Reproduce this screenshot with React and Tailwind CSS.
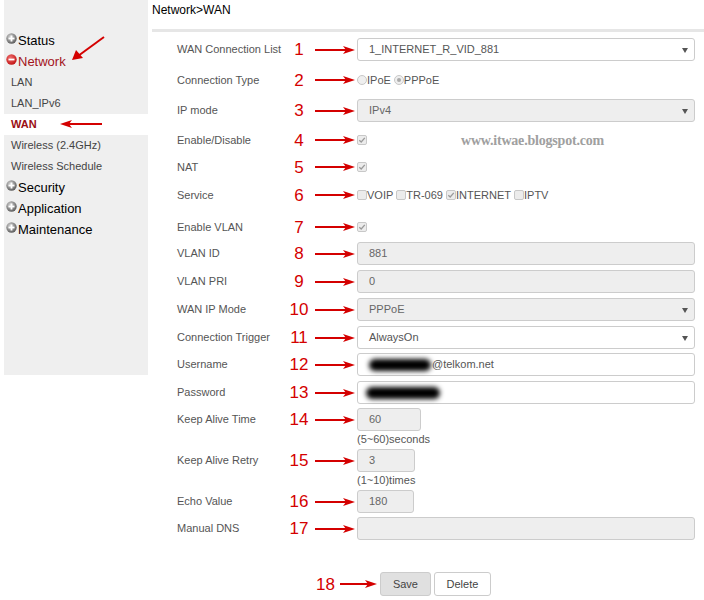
import React from "react";

const RED = "#d40000";

const Arrow = ({ w = 40 }) => (
  <svg width={w} height="10" viewBox={`0 0 ${w} 10`}>
    <line x1="0" y1="5" x2={w - 9} y2="5" stroke={RED} strokeWidth="2" />
    <polygon points={`${w - 12},1 ${w},5 ${w - 12},9 ${w - 9},5`} fill={RED} />
  </svg>
);

const Toggle = ({ minus }) => (
  <svg width="11" height="11" viewBox="0 0 11 11" className="mr-[1px] -mt-[4px] shrink-0">
    <defs>
      <radialGradient id={minus ? "gm" : "gp"} cx="0.4" cy="0.35" r="0.7">
        <stop offset="0" stopColor={minus ? "#f07070" : "#d8d8d8"} />
        <stop offset="1" stopColor={minus ? "#c01010" : "#555"} />
      </radialGradient>
    </defs>
    <circle cx="5.5" cy="5.5" r="5.2" fill={`url(#${minus ? "gm" : "gp"})`} />
    <rect x="2.5" y="4.6" width="6" height="1.8" fill="#fff" />
    {!minus && <rect x="4.6" y="2.5" width="1.8" height="6" fill="#fff" />}
  </svg>
);

const Check = ({ checked }) => (
  <span className="inline-flex items-center justify-center w-[10px] h-[10px] rounded-[2px] border border-[#c8c8c8] bg-[#ececec] shrink-0">
    {checked && (
      <svg width="8" height="8" viewBox="0 0 8 8">
        <path d="M1.3 4.2 L3.2 6 L6.8 1.8" stroke="#9a9a9a" strokeWidth="1.3" fill="none" />
      </svg>
    )}
  </span>
);

const Radio = ({ checked }) => (
  <span className="inline-flex items-center justify-center w-[10px] h-[10px] rounded-full border border-[#c8c8c8] bg-[#efefef] shrink-0">
    {checked && <span className="w-[4px] h-[4px] rounded-full bg-[#aaa]" />}
  </span>
);

const Caret = () => (
  <span className="absolute right-[6px] top-[9px] w-0 h-0 border-l-[3px] border-r-[3px] border-t-[5px] border-l-transparent border-r-transparent border-t-[#555]" />
);

const Box = ({ disabled, select, children, className = "" }) => (
  <div
    className={`relative h-[23px] flex items-center pl-[11px] border border-[#ccc] rounded-[3px] text-[11px] ${
      disabled ? "bg-[#eeeeee] text-[#666]" : "bg-white text-[#555]"
    } ${className}`}
  >
    {children}
    {select && <Caret />}
  </div>
);

const Row = ({ label, n, children, className = "" }) => (
  <div className={`flex items-center ${className}`}>
    <div className="w-[110px] text-[11px] text-[#555]">{label}</div>
    <div className="w-[24px] text-center text-[17px] leading-none" style={{ color: RED }}>
      {n}
    </div>
    <div className="w-[46px] flex pl-[4px]">
      <Arrow />
    </div>
    <div className="flex-1 flex items-center">{children}</div>
  </div>
);

const sub = ["LAN", "LAN_IPv6", "WAN", "Wireless (2.4GHz)", "Wireless Schedule"];

export default function App() {
  return (
    <div
      className="w-[704px] h-[600px] bg-white flex overflow-hidden"
      style={{ fontFamily: '"Liberation Sans", Arial, sans-serif' }}
    >
      <div className="relative ml-[4px] w-[144px] h-[375px] bg-[#efefef] pt-[30px] shrink-0">
        {["Status", "Network"].map((t) => (
          <div
            key={t}
            className={`h-[21px] flex items-center pl-[2px] text-[13px] ${
              t === "Network" ? "text-[#a3141c]" : "text-black"
            }`}
          >
            <Toggle minus={t === "Network"} />
            {t}
          </div>
        ))}
        {sub.map((t) => (
          <div
            key={t}
            className={`h-[21px] flex items-center pl-[7px] text-[11px] ${
              t === "WAN" ? "bg-white font-bold text-[#9a0f14]" : "text-[#444]"
            }`}
          >
            {t}
          </div>
        ))}
        {["Security", "Application", "Maintenance"].map((t) => (
          <div key={t} className="h-[21px] flex items-center pl-[2px] text-[13px] text-black">
            <Toggle />
            {t}
          </div>
        ))}
        <svg className="absolute left-[66px] top-[35px]" width="36" height="28" viewBox="0 0 36 28">
          <line x1="34" y1="2" x2="8" y2="21" stroke={RED} strokeWidth="2" />
          <polygon points="2,25 6,15 13,23" fill={RED} />
        </svg>
        <svg className="absolute left-[56px] top-[119px]" width="42" height="10" viewBox="0 0 42 10">
          <line x1="8" y1="5" x2="42" y2="5" stroke={RED} strokeWidth="2" />
          <polygon points="0,5 12,1 9,5 12,9" fill={RED} />
        </svg>
      </div>

      <div className="ml-[4px] flex-1 flex flex-col">
        <div className="h-[17px] mt-[1px] text-[12px] text-black flex items-center">Network&gt;WAN</div>
        <div className="mt-[11px] h-[3px] bg-[#e6e6e6]" />
        <div className="pl-[25px] pr-[9px] flex flex-col">
          <Row label="WAN Connection List" n="1" className="mt-[6px]">
            <Box select className="flex-1">1_INTERNET_R_VID_881</Box>
          </Row>
          <Row label="Connection Type" n="2" className="mt-[11px] h-[16px]">
            <div className="flex items-center text-[11px] text-[#555]">
              <Radio />
              <span className="mr-[3px]">IPoE</span>
              <Radio checked />
              <span>PPPoE</span>
            </div>
          </Row>
          <Row label="IP mode" n="3" className="mt-[11px]">
            <Box select disabled className="flex-1">IPv4</Box>
          </Row>
          <Row label="Enable/Disable" n="4" className="mt-[10px] h-[16px]">
            <Check checked />
            <span
              className="ml-[94px] text-[14px] font-bold text-[#a0a0a0] tracking-[-0.2px]"
              style={{ fontFamily: '"Liberation Serif", "Times New Roman", serif' }}
            >
              www.itwae.blogspot.com
            </span>
          </Row>
          <Row label="NAT" n="5" className="mt-[11px] h-[16px]">
            <Check checked />
          </Row>
          <Row label="Service" n="6" className="mt-[12px] h-[16px]">
            <div className="flex items-center text-[11px] text-[#555]">
              <Check />
              <span className="mr-[3px]">VOIP</span>
              <Check />
              <span className="mr-[3px]">TR-069</span>
              <Check checked />
              <span className="mr-[3px]">INTERNET</span>
              <Check />
              <span>IPTV</span>
            </div>
          </Row>
          <Row label="Enable VLAN" n="7" className="mt-[16px] h-[16px]">
            <Check checked />
          </Row>
          <Row label="VLAN ID" n="8" className="mt-[7px]">
            <Box disabled className="flex-1">881</Box>
          </Row>
          <Row label="VLAN PRI" n="9" className="mt-[5px]">
            <Box disabled className="flex-1">0</Box>
          </Row>
          <Row label="WAN IP Mode" n="10" className="mt-[5px]">
            <Box select disabled className="flex-1">PPPoE</Box>
          </Row>
          <Row label="Connection Trigger" n="11" className="mt-[5px]">
            <Box select className="flex-1">AlwaysOn</Box>
          </Row>
          <Row label="Username" n="12" className="mt-[4px]">
            <Box className="flex-1">
              <span className="w-[62px] h-[12px] rounded-full bg-black blur-[2.5px] mr-[1px]" />
              <span className="text-[#555]">@telkom.net</span>
            </Box>
          </Row>
          <Row label="Password" n="13" className="mt-[5px]">
            <Box className="flex-1">
              <span className="-ml-[3px] w-[74px] h-[12px] rounded-full bg-black blur-[2.5px]" />
            </Box>
          </Row>
          <Row label="Keep Alive Time" n="14" className="mt-[4px]">
            <Box disabled className="w-[64px]">60</Box>
          </Row>
          <div className="pl-[180px] text-[11px] text-[#555] h-[14px] mt-[1px] leading-[14px]">(5~60)seconds</div>
          <Row label="Keep Alive Retry" n="15" className="mt-[3px]">
            <Box disabled className="w-[58px]">3</Box>
          </Row>
          <div className="pl-[180px] text-[11px] text-[#555] h-[14px] mt-[1px] leading-[14px]">(1~10)times</div>
          <Row label="Echo Value" n="16" className="mt-[3px]">
            <Box disabled className="w-[57px]">180</Box>
          </Row>
          <Row label="Manual DNS" n="17" className="mt-[4px]">
            <Box disabled className="flex-1" />
          </Row>
          <div className="flex items-center mt-[32px] pl-[139px]">
            <span className="text-[17px] leading-none" style={{ color: RED }}>18</span>
            <span className="ml-[5px] flex">
              <Arrow w={37} />
            </span>
            <button className="ml-[3px] w-[51px] h-[24px] bg-[#e0e0e0] border border-[#ccc] rounded-[3px] text-[11px] text-[#444]">
              Save
            </button>
            <button className="ml-[3px] w-[57px] h-[24px] bg-white border border-[#ccc] rounded-[3px] text-[11px] text-[#444]">
              Delete
            </button>
          </div>
        </div>
      </div>
    </div>
  );
}
